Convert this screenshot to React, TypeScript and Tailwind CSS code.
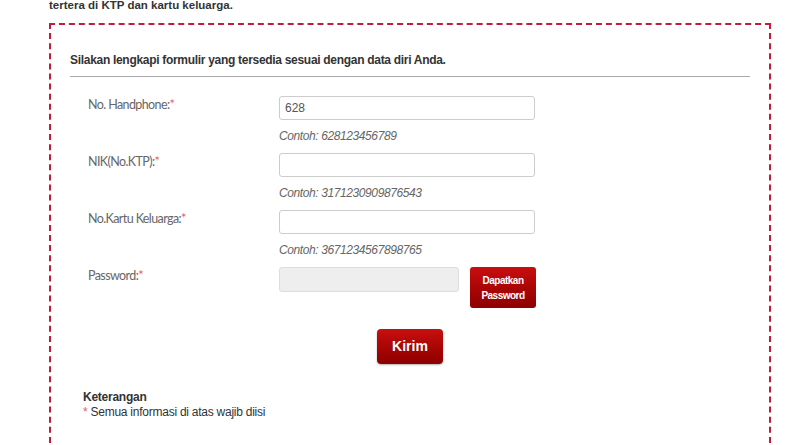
import React from "react";

const fields = [
  { label: "No. Handphone:", value: "628", hint: "Contoh: 628123456789" },
  { label: "NIK(No.KTP):", value: "", hint: "Contoh: 3171230909876543" },
  { label: "No.Kartu Keluarga:", value: "", hint: "Contoh: 3671234567898765" },
];

function Label({ text }: { text: string }) {
  return (
    <div className="w-[209px] shrink-0 pl-[18px] pt-[1px] text-[12.5px] leading-[16px] text-[#666] tracking-[-0.6px] [font-family:Lato,'Open_Sans',sans-serif]">
      {text}
      <span className="text-[#e05a6a]">*</span>
    </div>
  );
}

export default function App() {
  return (
    <div className="w-[800px] h-[445px] overflow-hidden bg-white [font-family:'Liberation_Sans',Arial,sans-serif] text-[#333]">
      <div className="pl-[49px] text-[11.5px] font-bold leading-[12px] -mt-[1px]">
        tertera di KTP dan kartu keluarga.
      </div>

      <div className="ml-[49px] mt-[12px] w-[722px] h-[430px] border-2 border-dashed border-[#c41a3b] px-[19px] pt-[28px]">
        <div className="text-[12px] font-bold leading-[14px] tracking-[-0.3px] text-[#333]">
          Silakan lengkapi formulir yang tersedia sesuai dengan data diri Anda.
        </div>
        <div className="mt-[9px] h-px bg-[#aaa]" />

        <div className="mt-[19px] flex flex-col">
          {fields.map((f) => (
            <div key={f.label} className="flex h-[57px]">
              <Label text={f.label} />
              <div className="flex flex-col">
                <input
                  readOnly
                  value={f.value}
                  className="w-[256px] h-[24px] rounded-[3px] border border-[#ccc] bg-white px-[5px] text-[12px] text-[#555] outline-none"
                />
                <div className="mt-[9px] text-[12px] italic leading-[14px] tracking-[-0.4px] text-[#666]">
                  {f.hint}
                </div>
              </div>
            </div>
          ))}

          <div className="flex">
            <Label text="Password:" />
            <div className="flex gap-[11px]">
              <input
                readOnly
                className="w-[180px] h-[25px] rounded-[3px] border border-[#ddd] bg-[#eee] outline-none"
              />
              <button className="w-[66px] h-[41px] rounded-[3px] bg-gradient-to-b from-[#c80f0f] to-[#8e0000] text-white text-[10px] font-bold leading-[15px] tracking-[-0.5px]">
                Dapatkan
                <br />
                Password
              </button>
            </div>
          </div>
        </div>

        <div className="mt-[21px] flex justify-center">
          <button className="w-[66px] h-[35px] rounded-[4px] bg-gradient-to-b from-[#c80f0f] to-[#8e0000] text-white text-[14px] font-bold shadow-[0_1px_2px_rgba(0,0,0,0.3)]">
            Kirim
          </button>
        </div>

        <div className="mt-[26px] pl-[13px] text-[12px] leading-[15px] tracking-[-0.25px] text-[#333]">
          <div className="font-bold">Keterangan</div>
          <div>
            <span className="text-[#e05a6a]">*</span> Semua informasi di atas wajib diisi
          </div>
        </div>
      </div>
    </div>
  );
}
